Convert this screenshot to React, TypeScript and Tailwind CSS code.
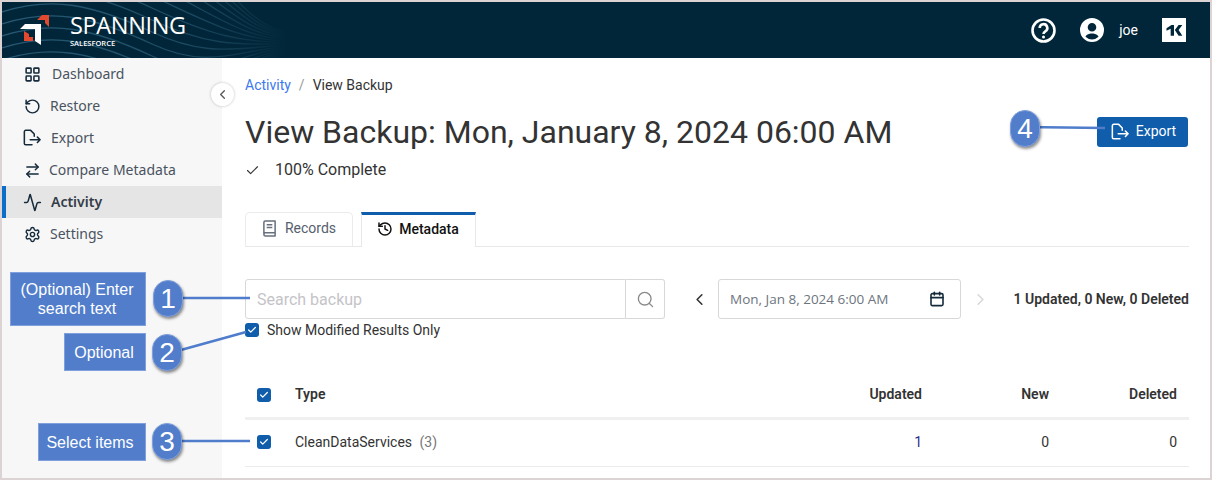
import React from "react";
import { LayoutGrid, RotateCcw, ArrowRightLeft, Activity, Settings, Check, ChevronLeft, ChevronRight, Search, Calendar, History } from "lucide-react";

function ExportIcon({ className = "" }: { className?: string }) {
  return (
    <svg viewBox="0 0 20 20" fill="none" stroke="currentColor" strokeWidth="1.7" strokeLinecap="round" strokeLinejoin="round" className={className}>
      <path d="M10 17.500H3a1.500 1.500 0 0 1-1.500-1.500V3A1.500 1.500 0 0 1 3 1.500h5.500L12.500 5.500V8" />
      <path d="M8 12h11M16 9l3 3-3 3" />
    </svg>
  );
}

function BookIcon({ className = "" }: { className?: string }) {
  return (
    <svg viewBox="0 0 16 18" fill="none" stroke="currentColor" strokeWidth="1.6" strokeLinejoin="round" className={className}>
      <path d="M2 14.500V2.500A1.500 1.500 0 0 1 3.500 1H14v12.500H3.500A1.700 1.700 0 0 0 2 15.200 1.700 1.700 0 0 0 3.500 17H14v-3.500" />
      <path d="M5 5h6M5 8h6" />
    </svg>
  );
}

function Nav({ icon, label, ml, active }: { icon: React.ReactNode; label: string; ml: string; active?: boolean }) {
  return (
    <div className={`flex h-8 items-center border-l-4 pl-[16px] text-[14px] ${active ? "border-[#0b6fc9] bg-[#e5e5e5] font-semibold text-[#333c48]" : "border-transparent text-[#4a5360]"}`}>
      <span className="flex w-5 justify-center text-[#152b3c]">{icon}</span>
      <span className={`${ml} -mt-[1px]`}>{label}</span>
    </div>
  );
}

function Box({ className = "" }: { className?: string }) {
  return (
    <span className={`flex h-[14px] w-[14px] shrink-0 items-center justify-center rounded-[3px] bg-[#0f5dab] ${className}`}>
      <Check size={10} strokeWidth={3} className="text-white" />
    </span>
  );
}

function Waves() {
  const rows = Array.from({ length: 16 }, (_, i) => i - 9);
  return (
    <svg viewBox="0 0 300 56" className="absolute left-0 top-0 h-14 w-[300px]" fill="none">
      <defs>
        <linearGradient id="waveFade" gradientUnits="userSpaceOnUse" x1="0" y1="0" x2="285" y2="0">
          <stop offset="0" stopColor="#285a74" />
          <stop offset="0.65" stopColor="#1d4b63" />
          <stop offset="1" stopColor="#012639" />
        </linearGradient>
      </defs>
      {rows.map((k) => {
        const d = k * 12;
        const e = 30 + (k + 9) * 1.5;
        return (
          <path key={k} d={`M0 ${10 + d} C50 ${d - 6} 90 ${d + 2} 150 ${d + 30} S240 ${e} 290 ${e}`} stroke="url(#waveFade)" strokeWidth="1.3" />
        );
      })}
    </svg>
  );
}

export default function App() {
  return (
    <div className="relative flex h-[480px] w-[1212px] flex-col overflow-hidden border-2 border-[#dcd4d4] bg-white font-['Roboto',sans-serif]">
      <header className="relative flex h-14 shrink-0 items-center justify-between overflow-hidden bg-[#012639] pl-[18px] pr-[24px]">
        <Waves />
        <div className="relative flex items-center gap-[20px]">
          <svg viewBox="20 15 30 30" className="-mt-[1px] h-[30px] w-[30px]">
            <path d="M20 29l5-5h16v21l-6-4V29z" fill="#fff" />
            <path d="M37 20l5-5h7v12l-4-4v-3z" fill="#e2492f" />
            <path d="M24 31l5 3v3h4v4h-9z" fill="#e2492f" />
          </svg>
          <div className="flex flex-col font-['Open_Sans',sans-serif] text-white">
            <span className="text-[23.5px] leading-[25px] tracking-[-0.35px]">SPANNING</span>
            <span className="text-[7.5px] font-semibold leading-[10px]">SALESFORCE</span>
          </div>
        </div>
        <div className="relative flex items-center text-white">
          <svg viewBox="0 0 25 25" className="h-[25px] w-[25px]" fill="none" stroke="#fff">
            <circle cx="12.500" cy="12.500" r="11" strokeWidth="2.600" />
            <path d="M8.700 10a3.800 3.800 0 1 1 5.600 3.300c-1.300.8-1.800 1.300-1.800 2.700" strokeWidth="2.600" strokeLinecap="butt" />
            <circle cx="12.500" cy="19" r="1.500" fill="#fff" stroke="none" />
          </svg>
          <svg viewBox="0 0 24 24" className="ml-[24px] h-[24px] w-[24px]" fill="#fff"><path fillRule="evenodd" d="M12 0a12 12 0 1 1 0 24 12 12 0 0 1 0-24zm0 5a4.300 4.300 0 1 0 0 8.600A4.300 4.300 0 0 0 12 5zm0 10.500c-3 0-6 1.300-6.500 3.300A9.200 9.200 0 0 0 12 21.500a9.200 9.200 0 0 0 6.500-2.700c-.5-2-3.500-3.300-6.500-3.300z" /></svg>
          <span className="ml-[15px] text-[14px]">joe</span>
          <span className="ml-[24px] flex h-6 w-6 items-center justify-center bg-white">
            <svg viewBox="0 0 24 24" className="h-5 w-5" fill="#012639"><path d="M3 10l6-4h3v13H8V10.500L3 13zM13 12l4.500-6H22l-4.500 6 4.500 7h-4.500z" /></svg>
          </span>
        </div>
      </header>

      <div className="flex min-h-0 flex-1">
        <aside className="w-[220px] shrink-0 bg-[#f7f7f7] font-['Noto_Sans',sans-serif]">
          <Nav icon={<LayoutGrid size={17} strokeWidth={2.2} />} label="Dashboard" ml="ml-[10px]" />
          <Nav icon={<RotateCcw size={17} strokeWidth={2.1} />} label="Restore" ml="ml-[8px]" />
          <Nav icon={<ExportIcon className="h-[18px] w-[18px]" />} label="Export" ml="ml-[9px]" />
          <Nav icon={<ArrowRightLeft size={17} strokeWidth={2} />} label="Compare Metadata" ml="ml-[7px]" />
          <Nav icon={<Activity size={19} strokeWidth={1.9} />} label="Activity" ml="ml-[9px]" active />
          <Nav icon={<Settings size={17} strokeWidth={2} />} label="Settings" ml="ml-[8px]" />
        </aside>

        <main className="relative min-w-0 flex-1 pl-[23px] pr-[21px] text-[#333]">
          <span className="absolute -left-[11px] top-[25px] flex h-[23px] w-[23px] items-center justify-center rounded-full bg-white shadow-[0_0_3px_rgba(0,0,0,0.25)]">
            <ChevronLeft size={15} className="text-[#555]" />
          </span>
          <div className="mt-[17px] flex h-[20px] items-center text-[14px]">
            <span className="text-[#3d78f0]">Activity</span>
            <span className="mx-[8px] text-[#999]">/</span>
            <span>View Backup</span>
          </div>
          <div className="mt-[18px] flex items-center justify-between">
            <h1 className="text-[32px] leading-[38px] text-[#333]">View Backup: Mon, January 8, 2024 06:00 AM</h1>
            <button className="mr-[1px] flex h-[30px] w-[91px] items-center justify-center gap-[7px] rounded-[3px] bg-[#0f5dab] pl-[2px] text-[14px] text-white">
              <ExportIcon className="h-[18px] w-[18px]" /><span className="-mt-[1px]">Export</span>
            </button>
          </div>
          <div className="mt-[9px] flex items-center text-[16px] leading-[20px]">
            <Check size={15} strokeWidth={1.8} />
            <span className="ml-[15px]">100% Complete</span>
          </div>

          <div className="mt-[32px] flex h-[35px] items-end border-b border-[#e8e8e8] text-[14px]">
            <div className="mb-[-1px] flex h-[35px] w-[108px] items-center justify-center gap-[8px] rounded-t-[5px] border border-b-0 border-[#ebebeb] pb-[4px] text-[#55606e]">
              <BookIcon className="h-[17px] w-[15px] text-[#67707c]" />Records
            </div>
            <div className="mb-[-1px] ml-[8px] flex h-[35px] w-[115px] items-center justify-center gap-[6px] border-x border-t-[3px] border-x-[#e8e8e8] border-t-[#0f5dab] bg-white pb-[4px] pr-[1px] font-medium text-[#111]">
              <History size={16} strokeWidth={2.2} />Metadata
            </div>
          </div>

          <div className="mt-[32px] flex h-[40px] items-center">
            <div className="flex h-[40px] w-[381px] items-center rounded-l-[3px] border border-[#d8d8d8] px-[11px] pt-[1px] text-[16px] text-[#c4c4c8]">Search backup</div>
            <div className="flex h-[40px] w-[39px] items-center justify-center rounded-r-[3px] border border-l-0 border-[#d8d8d8]">
              <Search size={19} className="text-[#8a8a8a]" strokeWidth={1.7} />
            </div>
            <ChevronLeft size={19} className="ml-[25px] text-[#333]" />
            <div className="ml-[9px] flex h-[40px] w-[243px] items-center justify-between rounded-[3px] border border-[#d8d8d8] pl-[11px] pr-[15px] font-['Open_Sans',sans-serif] text-[13.5px] text-[#6d7580]">
              Mon, Jan 8, 2024 6:00 AM
              <Calendar size={16} strokeWidth={2.4} className="text-[#152b3c]" />
            </div>
            <ChevronRight size={19} className="ml-[10px] text-[#d8d8d8]" />
            <span className="ml-auto text-[14px] font-semibold">1 Updated, 0 New, 0 Deleted</span>
          </div>

          <div className="mt-[3px] flex h-[16px] items-center text-[14px]">
            <Box />
            <span className="ml-[8px]">Show Modified Results Only</span>
          </div>

          <div className="mt-[36px] flex h-[46px] items-center border-b-[3px] border-[#f0f0f0] pb-[2px] text-[14px] font-semibold">
            <Box className="ml-[12px]" />
            <span className="ml-[24px] flex-1">Type</span>
            <span className="w-[127px] text-right">Updated</span>
            <span className="w-[127px] text-right">New</span>
            <span className="w-[140px] pr-[12px] text-right">Deleted</span>
          </div>
          <div className="flex h-[47px] items-center border-b border-[#ececec] pb-[2px] text-[14px]">
            <Box className="ml-[12px]" />
            <span className="ml-[24px] flex-1">CleanDataServices <span className="ml-[4px] text-[#777]">(3)</span></span>
            <span className="w-[127px] text-right text-[#2b2f86]">1</span>
            <span className="w-[127px] text-right">0</span>
            <span className="w-[140px] pr-[12px] text-right">0</span>
          </div>
        </main>
      </div>

      {/* callout annotations drawn over the page */}
      <svg className="pointer-events-none absolute -left-[2px] -top-[2px] h-[480px] w-[1212px]" viewBox="0 0 1212 480" fill="none" stroke="#4f7dcb" strokeWidth="2.5">
        <path d="M170 298H250M170 353L246 332M170 441H250M1024 127L1105 128" />
      </svg>
      {[
        { t: "(Optional) Enter\nsearch text", cls: "left-[8px] top-[270px] h-[54px] w-[136px] pr-[2px]" },
        { t: "Optional", cls: "left-[62px] top-[331px] h-[38px] w-[82px] pr-[2px]" },
        { t: "Select items", cls: "left-[36px] top-[421px] h-[38px] w-[108px] pr-[4px]" },
      ].map((b) => (
        <div key={b.t} className={`absolute flex items-center justify-center whitespace-pre-line border border-[#7fa0dc] bg-[#517dcb] text-center font-['Liberation_Sans',sans-serif] text-[16px] leading-[19px] text-white ${b.cls}`}>{b.t}</div>
      ))}
      {[
        { n: "1", cls: "left-[151px] top-[278px]" },
        { n: "2", cls: "left-[150px] top-[332px]" },
        { n: "3", cls: "left-[150px] top-[421px]" },
        { n: "4", cls: "left-[1008px] top-[108px]" },
      ].map((c) => (
        <div key={c.n} className={`absolute flex h-[37px] w-[30px] items-center justify-center rounded-full border border-[#7fa0dc] bg-[#517dcb] font-['Liberation_Sans',sans-serif] text-[28px] text-white shadow-[1px_2px_3px_rgba(0,0,0,0.45)] ${c.cls}`}>{c.n}</div>
      ))}
    </div>
  );
}
